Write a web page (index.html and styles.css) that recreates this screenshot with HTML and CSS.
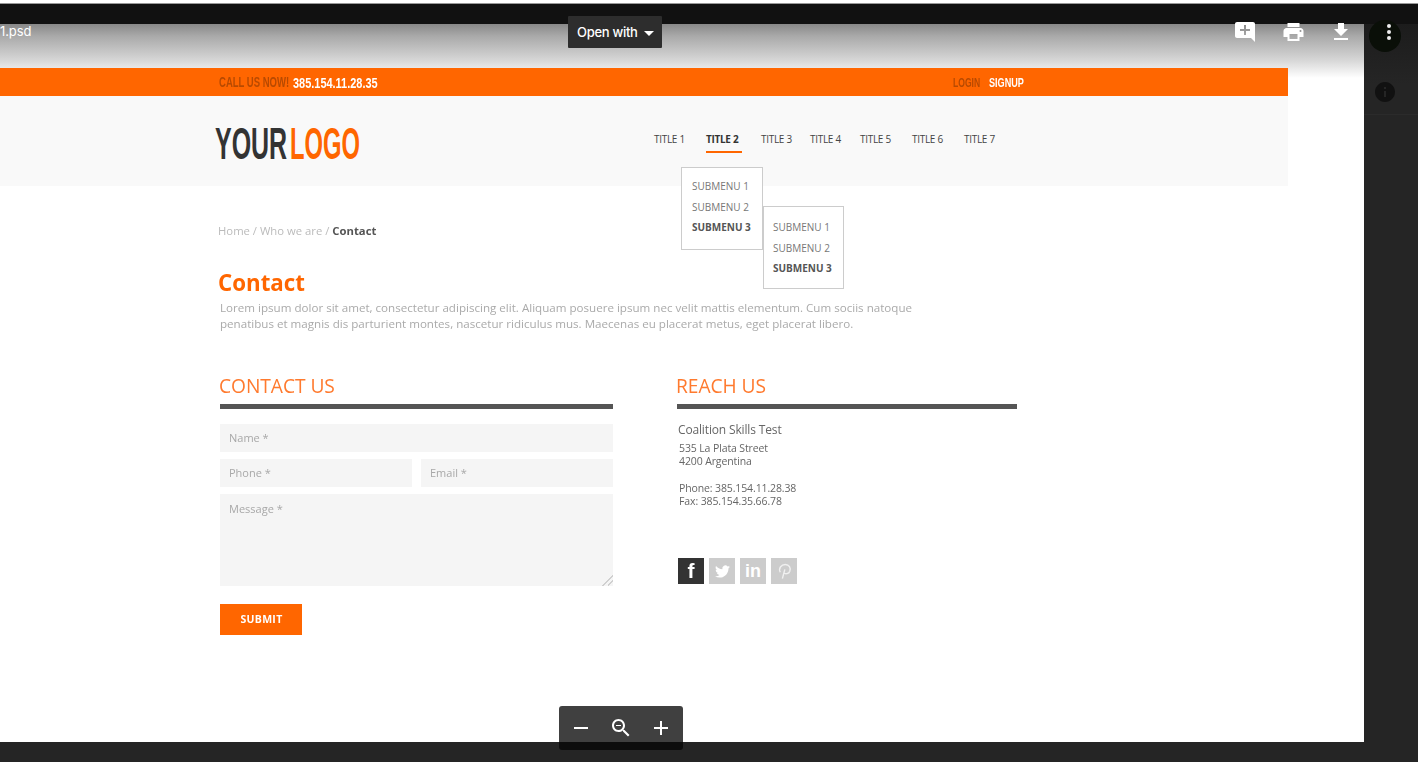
FILE: index.html
```html
<!DOCTYPE html>
<html lang="en">
<head>
<meta charset="utf-8">
<title>1.psd</title>
<link rel="stylesheet" href="styles.css">
</head>
<body>
<div class="app">
  <div class="topstrip"></div>
  <div class="workspace">
    <main class="canvas">
      <div class="mock">
        <div class="callbar">
          <span class="cond call-dim">CALL US NOW!</span>
          <span class="cond call-num">385.154.11.28.35</span>
          <span class="cond login">LOGIN</span>
          <span class="cond signup">SIGNUP</span>
        </div>
        <header class="site-head">
          <div class="logo"><span class="cond logo-a">YOUR</span><span class="cond logo-b">LOGO</span></div>
          <nav class="nav">
            <span>TITLE 1</span>
            <span class="nav-on">TITLE 2</span>
            <span>TITLE 3</span>
            <span>TITLE 4</span>
            <span>TITLE 5</span>
            <span>TITLE 6</span>
            <span>TITLE 7</span>
          </nav>
          <ul class="menu menu-one">
            <li>SUBMENU 1</li><li>SUBMENU 2</li><li class="menu-on">SUBMENU 3</li>
          </ul>
          <ul class="menu menu-two">
            <li>SUBMENU 1</li><li>SUBMENU 2</li><li class="menu-on">SUBMENU 3</li>
          </ul>
        </header>
        <section class="content">
          <p class="crumbs">Home / Who we are / <b>Contact</b></p>
          <h1 class="title">Contact</h1>
          <p class="lead">Lorem ipsum dolor sit amet, consectetur adipiscing elit. Aliquam posuere ipsum nec velit mattis elementum. Cum sociis natoque<br>penatibus et magnis dis parturient montes, nascetur ridiculus mus. Maecenas eu placerat metus, eget placerat libero.</p>
          <div class="columns">
            <div class="col-form">
              <h2 class="heading">CONTACT US</h2>
              <div class="rule"></div>
              <form class="form">
                <input class="field" placeholder="Name *">
                <div class="pair">
                  <input class="field" placeholder="Phone *">
                  <input class="field" placeholder="Email *">
                </div>
                <textarea class="field area" placeholder="Message *"></textarea>
                <button class="submit" type="button">SUBMIT</button>
              </form>
            </div>
            <div class="col-reach">
              <h2 class="heading">REACH US</h2>
              <div class="rule"></div>
              <p class="org">Coalition Skills Test</p>
              <p class="addr">535 La Plata Street<br>4200 Argentina</p>
              <p class="addr addr-gap">Phone: 385.154.11.28.38<br>Fax: 385.154.35.66.78</p>
              <div class="social">
                <span class="soc soc-on soc-f">f</span>
                <span class="soc"><svg class="bird" viewBox="0 0 24 24"><path d="M23.953 4.57a10 10 0 01-2.825.775 4.958 4.958 0 002.163-2.723c-.951.555-2.005.959-3.127 1.184a4.92 4.92 0 00-8.384 4.482C7.69 8.095 4.067 6.13 1.64 3.162a4.822 4.822 0 00-.666 2.475c0 1.71.87 3.213 2.188 4.096a4.904 4.904 0 01-2.228-.616v.06a4.923 4.923 0 003.946 4.827 4.996 4.996 0 01-2.212.085 4.936 4.936 0 004.604 3.417 9.867 9.867 0 01-6.102 2.105c-.39 0-.779-.023-1.17-.067a13.995 13.995 0 007.557 2.209c9.053 0 13.998-7.496 13.998-13.985 0-.21 0-.42-.015-.63A9.935 9.935 0 0024 4.59z"/></svg></span>
                <span class="soc soc-in">in</span>
                <span class="soc"><svg class="pin" viewBox="0 0 24 24"><path d="M9 22 12.5 9M6 13C3 7 8 2 13 2c6 0 8 5 6.500 9.500-1.500 4-6.500 4.500-8 2.500"/></svg></span>
              </div>
            </div>
          </div>
        </section>
      </div>
    </main>
    <aside class="rail">
      <div class="rail-head">
        <svg class="rail-info" viewBox="0 0 24 24"><path d="M12 2C6.48 2 2 6.48 2 12s4.48 10 10 10 10-4.48 10-10S17.52 2 12 2zm1 15h-2v-6h2v6zm0-8h-2V7h2v2z"/></svg>
      </div>
    </aside>
  </div>
  <div class="bottomstrip"></div>

  <div class="filename">1.psd</div>
  <div class="openwith">Open with<span class="caret"></span></div>
  <div class="actions">
    <svg class="ico ico-comment" viewBox="2 2 20 20"><path d="M22 4c0-1.1-.9-2-2-2H4c-1.1 0-2 .9-2 2v12c0 1.1.9 2 2 2h14l4 4V4zm-5 7h-4v4h-2v-4H7V9h4V5h2v4h4v2z"/></svg>
    <svg class="ico ico-print" viewBox="2 3 20 18"><path d="M19 8H5c-1.66 0-3 1.34-3 3v6h4v4h12v-4h4v-6c0-1.66-1.34-3-3-3zm-3 11H8v-5h8v5zm3-7c-.55 0-1-.45-1-1s.45-1 1-1 1 .45 1 1-.45 1-1 1zm-1-9H6v4h12V3z"/></svg>
    <svg class="ico ico-down" viewBox="5 3 14 17"><path d="M19 9h-4V3H9v6H5l7 7 7-7zM5 18v2h14v-2H5z"/></svg>
  </div>
  <div class="more"><i></i><i></i><i></i></div>
  <div class="zoombox">
    <svg class="zi" viewBox="0 0 24 24"><path d="M5 11h14v2H5z"/></svg>
    <svg class="zi" viewBox="0 0 24 24"><path d="M15.5 14h-.79l-.28-.27C15.41 12.59 16 11.11 16 9.5 16 5.91 13.09 3 9.500 3S3 5.910 3 9.500 5.910 16 9.500 16c1.610 0 3.090-.590 4.230-1.570l.270.280v.790l5 4.990L20.490 19l-4.990-5zm-6 0C7.010 14 5 11.990 5 9.500S7.010 5 9.500 5 14 7.010 14 9.500 11.990 14 9.500 14zM7 9h5v1H7z"/></svg>
    <svg class="zi" viewBox="0 0 24 24"><path d="M19 13h-6v6h-2v-6H5v-2h6V5h2v6h6v2z"/></svg>
  </div>
</div>
</body>
</html>
```
FILE: styles.css
```css
* { box-sizing: border-box; }
html, body { margin: 0; padding: 0; height: 100%; overflow: hidden; background: #252525; }
body { font-family: "Open Sans", "Noto Sans", sans-serif; }
p, h1, h2, ul { margin: 0; padding: 0; }

.app { position: relative; width: 1418px; height: 762px; display: flex; flex-direction: column; }
.topstrip { height: 24px; flex: none; background: #111; border-top: 3px solid #fff; box-shadow: inset 0 1px 0 #999; }
.workspace { height: 718px; flex: none; display: flex; }
.bottomstrip { flex: 1; background: #252525; }

.canvas { width: 1364px; flex: none; padding-top: 44px; overflow: hidden;
  background: linear-gradient(#888 0, #a9a9a9 12px, #d6d6d6 36px, #fff 54px) no-repeat; }
.rail { flex: 1; background: linear-gradient(#1c1c1c, #252525 60px); }
.rail-head { height: 91px; padding: 56px 12px 0 0; display: flex; justify-content: center; border-bottom: 1px solid #2b2b2b; }
.rail-info { width: 24px; height: 24px; fill: #111; }

.mock { width: 1288px; filter: blur(.7px); }

/* Condensed display type: no condensed family is installed, so the face is narrowed */
.cond { display: inline-block; flex: none; white-space: nowrap; transform-origin: 0 50%; font-family: "Liberation Sans", sans-serif; font-weight: 700; }

.callbar { height: 28px; display: flex; align-items: center; padding: 0 264px 0 219px; background: #ff6600; }
.call-dim { width: 68px; font-size: 14px; color: #b84a00; transform: scaleX(.68); }
.call-num { width: 85px; font-size: 15px; color: #fff; margin-left: 6px; transform: scaleX(.73); }
.login { width: 27px; margin-left: auto; font-size: 13px; color: #b84a00; transform: scaleX(.66); }
.signup { width: 35px; margin-left: 9px; font-size: 13px; color: #fff; transform: scaleX(.7); }

.site-head { position: relative; height: 90px; display: flex; background: #f9f9f9; padding-left: 215px; }
.logo { width: 439px; padding-top: 22px; font-size: 44px; line-height: 48px; }
.logo-a { width: 75px; color: #333; transform: scaleX(.567); }
.logo-b { width: 69px; color: #ff6600; transform: scaleX(.54); }
.nav { display: grid; grid-template-columns: 52px 55px 49px 50px 52px 52px auto; height: 57px; padding-top: 35px;
  font-size: 10px; line-height: 16px; color: #444; letter-spacing: -.3px; }
.nav-on { font-weight: 700; color: #333; width: 36px; height: 22px; border-bottom: 2px solid #ff6600; }

.menu { position: absolute; list-style: none; height: 83px; padding: 8px 0 0 10px; background: #fff;
  border: 1px solid #ccc; font-size: 10px; line-height: 20.6px; color: #777; z-index: 2; }
.menu-one { left: 681px; top: 71px; width: 82px; }
.menu-two { left: 763px; top: 110px; width: 81px; padding: 10px 0 0 9px; }
.menu-on { font-weight: 700; color: #555; }

.content { padding: 37px 0 0 220px; }
.crumbs { margin-left: -2px; font-size: 11.3px; line-height: 16px; color: #bbb; }
.crumbs b { color: #555; }
.title { margin: 27px 0 0 -2px; font-size: 22.3px; line-height: 34px; font-weight: 700; color: #ff6600; }
.lead { font-size: 11.6px; line-height: 16px; color: #aaa; white-space: nowrap; }
.columns { display: grid; grid-template-columns: 393px 340px; column-gap: 64px; margin-top: 41px; }
.heading { margin-left: -1px; font-size: 19.2px; line-height: 26px; font-weight: 400; color: #ff7a2e; letter-spacing: -.05px; }
.rule { height: 5px; margin-top: 5px; background: #555; }

.form { display: flex; flex-direction: column; gap: 7px; margin-top: 15px; align-items: stretch; }
.pair { display: grid; grid-template-columns: 192px 192px; column-gap: 9px; }
.field { display: block; width: 100%; height: 28px; padding: 0 9px 2px; margin: 0; border: 0; border-radius: 0; outline: 0;
  background: #f5f5f5; font-family: inherit; font-size: 11px; color: #999; }
.field::placeholder { color: #a8a8a8; opacity: 1; }
.area { height: 92px; padding-top: 7px; resize: both; }
.area::-webkit-resizer { background: linear-gradient(135deg, transparent 62%, #d0d0d0 62% 68%, transparent 68% 80%, #d0d0d0 80% 86%, transparent 86%); }
.submit { width: 82px; height: 31px; margin-top: 11px; padding: 0 0 2px 1px; border: 0; background: #ff6600;
  color: #fff; font-family: inherit; font-size: 10.5px; font-weight: 700; letter-spacing: .3px; }

.col-reach { min-width: 0; }
.org { margin: 13px 0 0 1px; font-size: 12px; line-height: 16px; color: #666; letter-spacing: -.15px; }
.addr { margin: 4px 0 0 2px; font-size: 10.5px; line-height: 13px; color: #666; letter-spacing: -.12px; }
.addr-gap { margin-top: 14px; }
.social { display: flex; gap: 5px; margin: 50px 0 0 1px; }
.soc { width: 26px; height: 26px; display: flex; align-items: center; justify-content: center; background: #ccc; color: #fff; font-family: "Liberation Sans", sans-serif; font-weight: 700; font-size: 19px; }
.soc-on { background: #333; }
.soc-f { font-size: 21px; }
.soc-in { font-size: 18px; }
.bird { width: 15px; height: 15px; fill: #fff; }
.pin { width: 17px; height: 19px; fill: none; stroke: #f0f0f0; stroke-width: 2; }

.filename { position: absolute; left: 0; top: 22px; font-family: Inter, Roboto, sans-serif; font-size: 13px; line-height: 18px; color: #fff; letter-spacing: -.1px; }
.openwith { position: absolute; left: 568px; top: 16px; width: 94px; height: 32px; padding-left: 9px; display: flex; align-items: center;
  background: #2d2d2d; border-radius: 1px; font-family: Inter, Roboto, sans-serif; font-size: 13px; font-weight: 500; color: #fff; letter-spacing: -.3px; }
.caret { margin: 2px 0 0 6px; border-left: 5px solid transparent; border-right: 5px solid transparent; border-top: 5px solid #fff; }
.actions { position: absolute; left: 1235px; top: 22px; display: flex; align-items: flex-start; }
.ico { fill: #fff; display: block; }
.ico-comment { width: 20px; height: 20px; }
.ico-print { width: 21px; height: 18px; margin: 1px 0 0 28px; }
.ico-down { width: 14px; height: 17px; margin: 1px 0 0 30px; }
.more { position: absolute; left: 1369px; top: 20px; width: 32px; height: 32px; border-radius: 50%; background: #0a0f08;
  display: flex; flex-direction: column; align-items: flex-end; gap: 2px; padding: 4px 10px 0 0; }
.more i { width: 4px; height: 4px; border-radius: 50%; background: #eee; }
.zoombox { position: absolute; left: 559px; top: 706px; width: 124px; height: 44px; border-radius: 3px;
  display: flex; align-items: center; justify-content: space-between; padding: 0 10px;
  background: linear-gradient(#404040 0 36px, #0d0d0d 36px); }
.zi { width: 24px; height: 24px; fill: #fff; }
```
